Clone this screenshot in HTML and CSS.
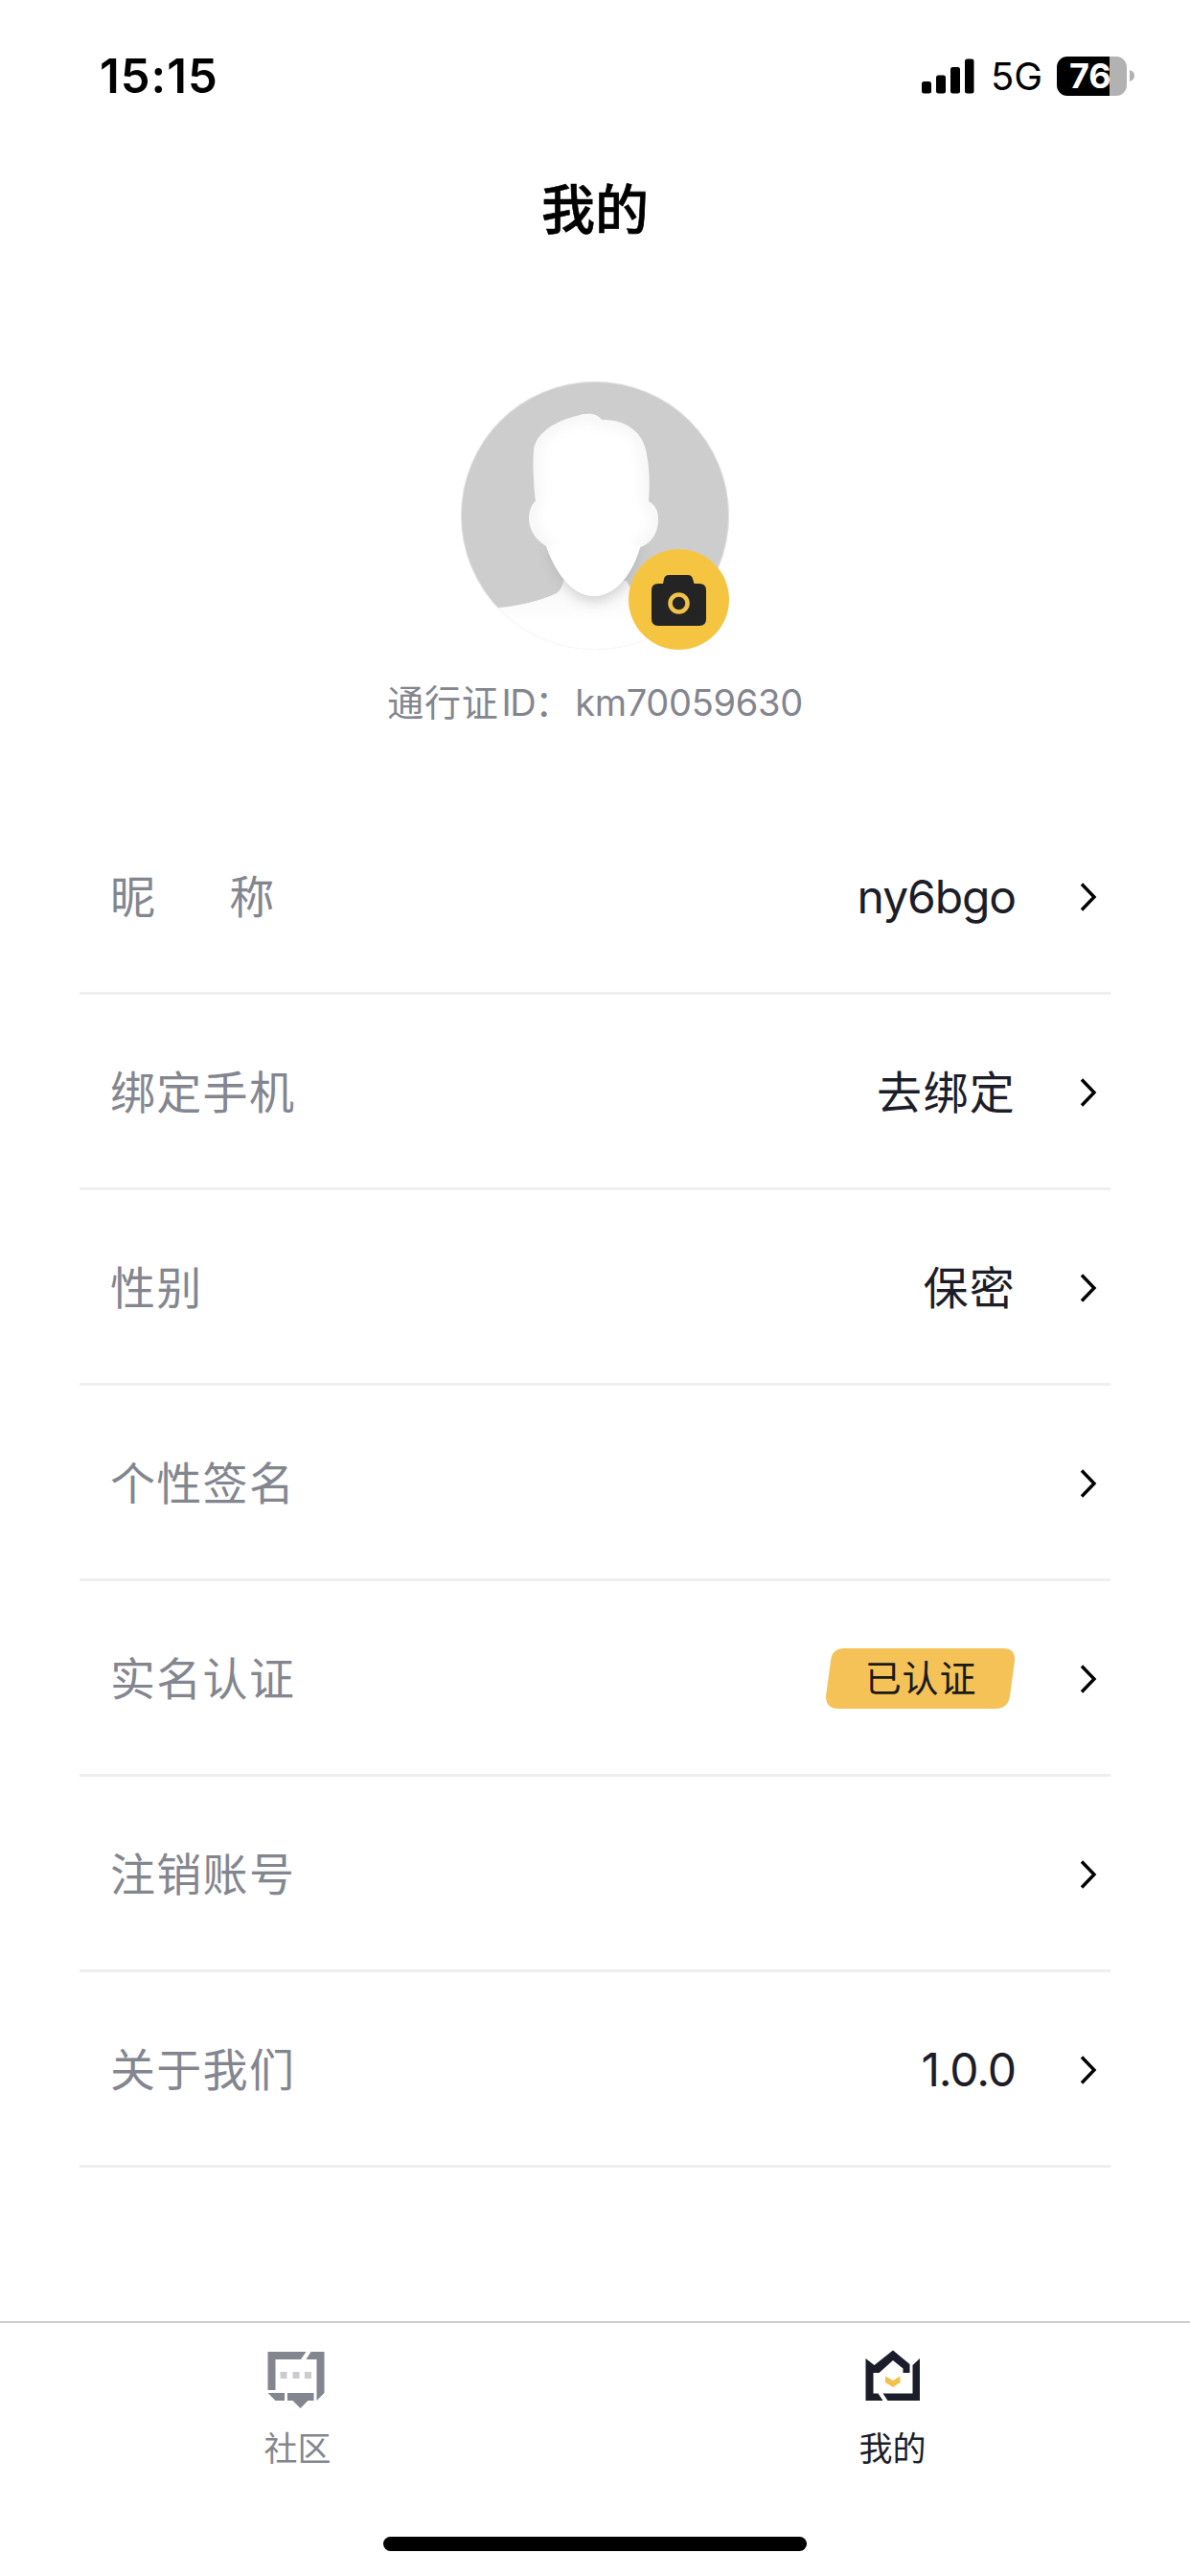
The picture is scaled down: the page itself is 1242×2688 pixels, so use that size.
FILE: index.html
```html
<!DOCTYPE html>
<html lang="zh-CN">
<head>
<meta charset="utf-8">
<title>我的</title>
<link rel="stylesheet" href="styles.css">
</head>
<body>
<svg class="defs" aria-hidden="true">
  <symbol id="chevron" viewBox="0 0 18 32"><path d="M2 2.5 15 16 2 29.5" fill="none" stroke="#000" stroke-width="3.4"/></symbol>
</svg>
<div class="screen">
  <header class="status">
    <span class="time">15:15</span>
    <div class="indicators">
      <svg class="signal" viewBox="0 0 55 37"><rect y="24" width="10" height="12.5" rx="2.5"/><rect x="15" y="17.500" width="10" height="19" rx="2.500"/><rect x="30" y="9" width="10" height="27.500" rx="2.500"/><rect x="45" y="0.500" width="9.500" height="36" rx="2.500"/></svg>
      <span class="network">5G</span>
      <div class="battery"><span class="level">76</span></div>
      <svg class="battery-cap" viewBox="0 0 5 12"><path d="M0 0Q5 1.500 5 6T0 12Z" fill="#b2b2b2"/></svg>
    </div>
  </header>
  <h1 class="title">我的</h1>

  <section class="profile">
    <div class="avatar">
      <svg class="portrait" viewBox="0 0 280 280">
        <defs>
          <clipPath id="round"><circle cx="140" cy="140" r="140"/></clipPath>
          <linearGradient id="shirt" x1="0" y1="0" x2="0" y2="1"><stop offset="0" stop-color="#f6f6f6"/><stop offset="0.600" stop-color="#fff"/></linearGradient>
          <clipPath id="headClip"><path id="head" d="M76 72C78 52 103 40 121 36C132 32 142 33 147 40C178 40 192 58 194 77C197 92 197 107 196 125C203 129 206 136 206 143C206 158 199 169 187 173C180 199 162 224 139 224C115 224 98 197 89 172C78 165 72 156 71 144C71 135 74 128 78 125C76 108 75 88 76 72Z"/></clipPath>
          <filter id="soft" x="-30%" y="-30%" width="160%" height="160%"><feGaussianBlur stdDeviation="7"/></filter>
        </defs>
        <g clip-path="url(#round)">
          <rect width="280" height="280" fill="#cdcdcd"/>
          <path d="M30 237Q72 234 100 221Q106 216 107 208L173 208L180 222Q220 238 260 240V280H30Z" fill="url(#shirt)"/>
          <path d="M91 174C100 199 115 229 139 229C162 229 180 204 187 174Z" fill="#9c9c9c" opacity="0.450" filter="url(#soft)"/>
          <use href="#head" fill="#fff"/>
          <g clip-path="url(#headClip)"><use href="#head" fill="none" stroke="#ececec" stroke-width="12" opacity="0.600" filter="url(#soft)"/><path d="M90 172Q138 160 188 172L180 224H98Z" fill="#fff"/></g>
        </g>
        <circle cx="140" cy="140" r="139.500" fill="none" stroke="#f4f4f4" stroke-width="0.500"/>
      </svg>
      <svg class="camera" viewBox="0 0 105 105"><circle cx="52.500" cy="52.500" r="52.500" fill="#f5c542"/><path d="M37 31Q38 27 42 27H62Q66 27 67 31L68.500 36H74Q81 36 81 43V73Q81 80 74 80H31Q24 80 24 73V43Q24 36 31 36H36Z" fill="#242424"/><circle cx="52.500" cy="56.500" r="9" fill="none" stroke="#f0c245" stroke-width="4.500"/></svg>
    </div>
    <p class="pass"><span class="pass-label">通行证</span><span class="pass-id">ID</span>：<span class="number">km70059630</span></p>
  </section>

  <main class="list">
    <div class="row"><span class="label spread"><span>昵</span><span>称</span></span><span class="value latin">ny6bgo</span><svg class="arrow"><use href="#chevron"/></svg></div>
    <div class="row"><span class="label">绑定手机</span><span class="value">去绑定</span><svg class="arrow"><use href="#chevron"/></svg></div>
    <div class="row"><span class="label">性别</span><span class="value">保密</span><svg class="arrow"><use href="#chevron"/></svg></div>
    <div class="row"><span class="label">个性签名</span><span class="value"></span><svg class="arrow"><use href="#chevron"/></svg></div>
    <div class="row"><span class="label">实名认证</span><span class="badge"><svg class="badge-shape" viewBox="0 0 198 63"><path d="M18 0H185Q198 0 197 13L192 50Q190 63 177 63H13Q0 63 0 50L5 13Q6 1 18 0Z" fill="#f5c258"/></svg><span class="badge-text">已认证</span></span><svg class="arrow"><use href="#chevron"/></svg></div>
    <div class="row"><span class="label">注销账号</span><span class="value"></span><svg class="arrow"><use href="#chevron"/></svg></div>
    <div class="row"><span class="label">关于我们</span><span class="value latin">1.0.0</span><svg class="arrow"><use href="#chevron"/></svg></div>
  </main>

  <nav class="tabs">
    <div class="tab">
      <svg class="icon" viewBox="1.5 0 60 60"><g fill="#84868f"><path d="M0 0H40L34.500 8H8V40H0Z"/><path d="M45 0H59V43L51 51V8H40Z"/><path d="M0 43H17.500V51H8Z"/><path d="M20.500 43H48V51H42L34 59 26 51H20.500Z"/></g><path d="M13 21h7v7h-7zM26 21h7v7h-7zM38.500 21h7v7h-7z" fill="#cbccd1"/></svg>
      <span>社区</span>
    </div>
    <div class="tab active">
      <svg class="icon" viewBox="1.5 0 60 60"><g fill="#1c1d2a"><path d="M3 7 12 14 31.500-1.500 49 13V22H42V17.500L31.500 9 17 22H11V43.500H16L21 51H3Z"/><path d="M59.500 7V51H26L21 43.500H52V14Z"/></g><path d="M23.500 25.500 31.500 30 39 25.500V32L31.500 37 23.500 32Z" fill="#f3c04a"/></svg>
      <span>我的</span>
    </div>
  </nav>
  <div class="home"></div>
</div>
</body>
</html>
```
FILE: styles.css
```css
* { box-sizing: border-box; }
body {
  margin: 0;
  background: #fff;
  color: #1c1d28;
  font-family: Inter, "Noto Sans CJK SC", sans-serif;
}
.defs { display: none; }
.screen {
  display: flex;
  flex-direction: column;
  width: 1242px;
  height: 2688px;
}
.status {
  display: flex;
  justify-content: space-between;
  align-items: center;
  height: 158px;
  padding: 0 58px 0 104px;
  color: #000;
}
.time {
  padding-top: 1px;
  font-size: 49px;
  font-weight: 600;
  line-height: 60px;
  letter-spacing: 1px;
}
.indicators { display: flex; align-items: center; }
.signal { width: 55px; height: 37px; }
.network {
  width: 52px;
  margin-left: 17px;
  padding-top: 2px;
  font-size: 40px;
  line-height: 48px;
}
.battery {
  width: 73px;
  height: 41px;
  margin-left: 17px;
  border-radius: 11px;
  background: linear-gradient(to right, #000 55px, #b2b2b2 55px);
  color: #fff;
  font-size: 36px;
  font-weight: 700;
  line-height: 41px;
  padding-left: 13px;
}
.battery-cap { width: 5px; height: 12px; margin-left: 3px; }
.title {
  height: 122px;
  margin: 0;
  color: #000;
  font-size: 56px;
  font-weight: 500;
  line-height: 122px;
  text-align: center;
  -webkit-text-stroke: 0.6px #000;
}
.profile {
  display: flex;
  flex-direction: column;
  align-items: center;
  height: 554px;
  padding-top: 118px;
}
.avatar { position: relative; width: 280px; height: 280px; }
.portrait { display: block; width: 280px; height: 280px; }
.camera {
  position: absolute;
  right: 0;
  bottom: 0;
  width: 105px;
  height: 105px;
}
.pass {
  margin: 28px 0 0;
  color: #84868f;
  font-size: 38px;
  line-height: 54px;
  white-space: nowrap;
}
.pass-label { letter-spacing: 0.8px; }
.pass-id { margin-left: 3px; letter-spacing: -1.5px; }
.number { margin-left: 4px; letter-spacing: -0.3px; }
.list { padding: 0 83px; }
.row {
  display: flex;
  align-items: center;
  height: 204px;
  padding: 3px 14px 0 32px;
  border-bottom: 3px solid #efeff2;
}
.label {
  flex: 1;
  color: #84868f;
  font-size: 47px;
  line-height: 66px;
  letter-spacing: 1.3px;
}
.spread { display: flex; gap: 76px; }
.value {
  font-size: 47px;
  line-height: 66px;
  letter-spacing: 1.3px;
}
.latin { font-size: 48px; letter-spacing: -1.1px; }
.arrow { width: 18px; height: 32px; margin-left: 67px; }
.badge { display: grid; width: 198px; height: 63px; margin-bottom: 2px; }
.badge-shape, .badge-text { grid-area: 1 / 1; }
.badge-shape { width: 198px; height: 63px; }
.badge-text {
  color: #1a1a1a;
  font-size: 38px;
  line-height: 63px;
  letter-spacing: 0.8px;
  text-align: center;
}
.tabs {
  display: flex;
  height: 222px;
  margin-top: 160px;
  border-top: 2px solid #cfcfcf;
}
.tab {
  display: flex;
  flex: 1;
  flex-direction: column;
  align-items: center;
  padding-top: 30px;
  color: #84868f;
  font-size: 35px;
  line-height: 44px;
}
.tab.active { color: #1c1d28; }
.icon { width: 60px; height: 60px; margin-bottom: 19px; overflow: visible; }
.home {
  width: 442px;
  height: 15px;
  margin: 3px auto 0;
  border-radius: 8px;
  background: #000;
}
```
